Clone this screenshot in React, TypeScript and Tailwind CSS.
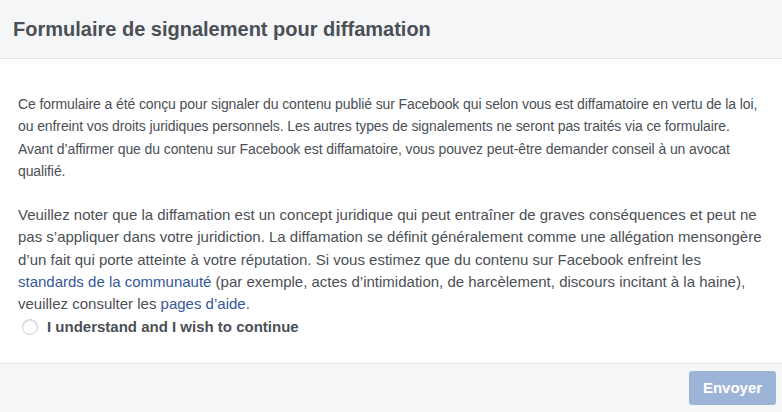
export default function App() {
  return (
    <div className="w-[782px] h-[412px] bg-white flex flex-col font-['Liberation_Sans',Arial,sans-serif] text-[#4b4f56] overflow-hidden">
      {/* Header */}
      <div className="h-[59px] shrink-0 bg-[#f5f6f7] border-b border-[#e5e5e5] flex items-center px-[13px]">
        <h1 className="text-[20px] font-bold text-[#4b4f56]">
          Formulaire de signalement pour diffamation
        </h1>
      </div>

      {/* Body */}
      <div className="flex-1 px-[18px] pt-[34px] leading-[22.3px] whitespace-nowrap">
        <p className="text-[14px] tracking-[-0.1px]">
          Ce formulaire a été conçu pour signaler du contenu publié sur Facebook qui selon vous est diffamatoire en vertu de la loi,
          <br />
          ou enfreint vos droits juridiques personnels. Les autres types de signalements ne seront pas traités via ce formulaire.
          <br />
          Avant d’affirmer que du contenu sur Facebook est diffamatoire, vous pouvez peut-être demander conseil à un avocat
          <br />
          qualifié.
        </p>
        <p className="mt-[22px] text-[15px]">
          Veuillez noter que la diffamation est un concept juridique qui peut entraîner de graves conséquences et peut ne
          <br />
          pas s’appliquer dans votre juridiction. La diffamation se définit généralement comme une allégation mensongère
          <br />
          d’un fait qui porte atteinte à votre réputation. Si vous estimez que du contenu sur Facebook enfreint les
          <br />
          <a className="text-[#365899]">standards de la communauté</a> (par exemple, actes d’intimidation, de harcèlement, discours incitant à la haine),
          <br />
          veuillez consulter les <a className="text-[#365899]">pages d’aide</a>.
        </p>
        <label className="ml-[4px] h-[22px] flex items-center gap-[9px]">
          <span className="w-[16px] h-[16px] rounded-full border border-[#ccd0d5] bg-white shadow-[inset_0_1px_2px_rgba(0,0,0,0.12)]" />
          <span className="font-bold text-[15px] text-[#4b4f56]">I understand and I wish to continue</span>
        </label>
      </div>

      {/* Footer */}
      <div className="h-[49px] shrink-0 bg-[#f5f6f7] border-t border-[#e5e5e5] flex items-center justify-end pr-[6px]">
        <button className="h-[34px] w-[87px] rounded-[3px] bg-[#9cb4d8] text-white font-bold text-[15px]">
          Envoyer
        </button>
      </div>
    </div>
  );
}
